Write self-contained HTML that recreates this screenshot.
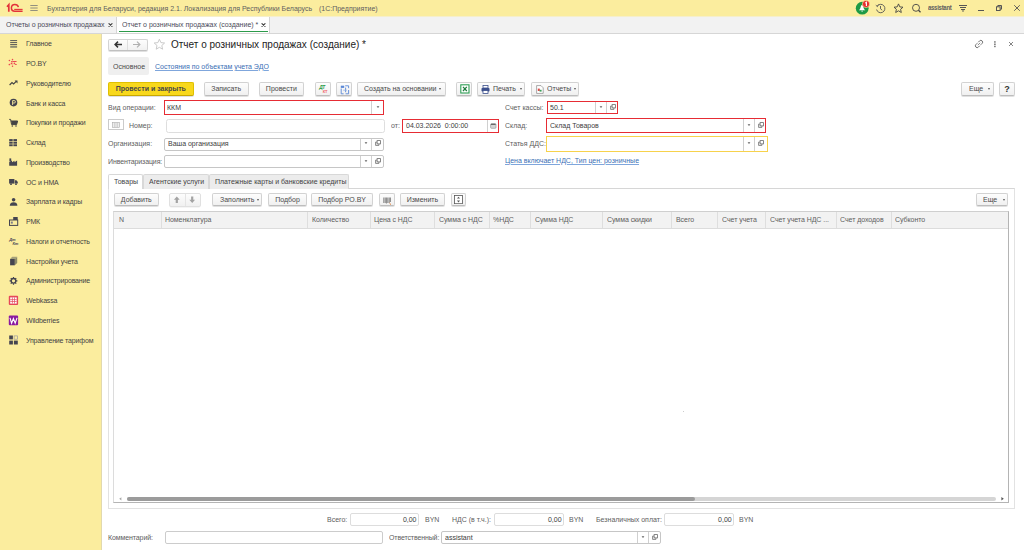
<!DOCTYPE html>
<html><head><meta charset="utf-8">
<style>
*{box-sizing:border-box;margin:0;padding:0}
html,body{width:1024px;height:550px;overflow:hidden;background:#fff;font-family:"Liberation Sans",sans-serif;font-size:7px;color:#4d4d4d}
.a{position:absolute;white-space:nowrap}
.t{position:absolute;white-space:nowrap;font-size:7px;line-height:10px;height:10px}
.s{transform:scaleX(var(--sx));transform-origin:0 50%}
:root{--sx:0.9}
.btn{position:absolute;height:14px;border:1px solid #d2d2d2;border-bottom-color:#bdbdbd;border-radius:2px;background:linear-gradient(#fdfdfd,#f0f0f0);box-shadow:0 1px 0.5px rgba(0,0,0,.12);color:#4a4a4a;font-size:7px;white-space:nowrap}
.btn span.l{position:absolute;top:1.5px;line-height:10px}
.fld{position:absolute;background:#fff;border:1px solid #c6c6c6;border-radius:2px}
.fld .v{position:absolute;left:3px;top:50%;margin-top:-5px;line-height:10px;color:#333;white-space:nowrap}
.dd{position:absolute;top:1px;bottom:1px;width:1px;background:#d6d6d6}
.th{position:absolute;top:0;height:16px;line-height:16px;padding-left:4px;color:#555;font-size:7px;white-space:nowrap}
.thd{position:absolute;top:0;height:15px;width:1px;background:#e2e2e2}
</style></head><body>
<div class="a" style="left:0;top:0;width:1024px;height:16px;background:#fbed9e"></div>
<svg class="a" style="left:4px;top:1px" width="20" height="14" viewBox="4 1 20 14">
    <path d="M7 6.7 L8.8 4.7 V11.8" stroke="#e3323a" stroke-width="1.7" fill="none"/>
    <path d="M18.4 7.1 C17.9 5.3 16.6 4.6 14.9 4.6 C12.7 4.6 11.4 6.1 11.4 8.1 C11.4 10.2 12.8 11.3 14.8 11.3 H22.6" stroke="#e3323a" stroke-width="1.5" fill="none"/>
    <path d="M14.2 9.4 H22.6" stroke="#e3323a" stroke-width="1.1" fill="none"/>
  </svg>
<svg class="a" style="left:30px;top:4px" width="8" height="8" viewBox="0 0 8 8"><path d="M0.3 1.5H7.7M0.3 4H7.7M0.3 6.5H7.7" stroke="#777" stroke-width="0.8"/></svg>
<div class="t s" style="left:47px;top:3.80px;color:#606060;font-size:7.78px;">Бухгалтерия для Беларуси, редакция 2.1. Локализация для Республики Беларусь</div>
<div class="t s" style="left:318.5px;top:3.80px;color:#606060;font-size:7.78px;">(1С:Предприятие)</div>
<svg class="a" style="left:855px;top:0px" width="16" height="16" viewBox="0 0 16 16">
    <circle cx="7.2" cy="8.2" r="6.4" fill="#1e9a45"/>
    <path d="M3.9 10.3 C5.1 9.3 5.5 7.6 5.9 6.2 C6.1 5.4 6.5 5 7 5 C7.5 5 7.9 5.4 8.1 6.2 C8.5 7.6 8.9 9.3 10.3 10.3 Z" fill="#fff"/>
    <circle cx="7.1" cy="11.1" r="0.7" fill="#fff"/>
    <circle cx="11" cy="4" r="3.6" fill="#e52d2d" stroke="#fbed9e" stroke-width="0.6"/>
    <path d="M10.2 3.1 L11.4 2.3 V6" stroke="#fff" stroke-width="1.1" fill="none"/>
  </svg>
<svg class="a" style="left:875px;top:3px" width="11" height="11" viewBox="0 0 11 11">
    <path d="M2.2 3.2 A4.2 4.2 0 1 1 1.6 6.5" stroke="#555" stroke-width="0.9" fill="none"/>
    <path d="M0.8 2.2 L2.4 3.6 L3.4 1.6" stroke="#555" stroke-width="0.9" fill="none"/>
    <path d="M5.5 3 V5.8 L7.2 7.2" stroke="#555" stroke-width="0.9" fill="none"/>
  </svg>
<svg class="a" style="left:893px;top:3px" width="11" height="11" viewBox="0 0 11 11">
    <path d="M5.5 0.9 L6.8 3.9 L10 4.2 L7.6 6.3 L8.3 9.5 L5.5 7.8 L2.7 9.5 L3.4 6.3 L1 4.2 L4.2 3.9 Z" stroke="#444" stroke-width="0.9" fill="none" stroke-linejoin="round"/>
  </svg>
<svg class="a" style="left:911px;top:3px" width="11" height="11" viewBox="0 0 11 11">
    <circle cx="5" cy="4.8" r="3.5" stroke="#444" stroke-width="0.9" fill="none"/>
    <path d="M7.5 7.3 L9.5 9.3" stroke="#444" stroke-width="1.3"/>
  </svg>
<div class="t s" style="left:928px;top:3.30px;color:#606060;font-size:6.67px;font-weight:bold;letter-spacing:-0.3px">assistant</div>
<svg class="a" style="left:958px;top:4px" width="10" height="9" viewBox="0 0 10 9">
    <path d="M1 1.5H9M2 3.5H8M3 5.5H7" stroke="#555" stroke-width="1"/>
    <path d="M3.7 6.5H6.3L5 8Z" fill="#555"/>
  </svg>
<div class="a" style="left:978px;top:10px;width:5.5px;height:1px;background:#555"></div>
<svg class="a" style="left:996px;top:5px" width="6" height="6" viewBox="0 0 6 6">
    <rect x="0.5" y="1.8" width="3.6" height="3.7" stroke="#555" stroke-width="1" fill="none"/>
    <path d="M1.8 1.8V0.5H5.5V4.2H4.1" stroke="#555" stroke-width="1" fill="none"/>
  </svg>
<svg class="a" style="left:1013px;top:4px" width="8" height="8" viewBox="0 0 8 8"><path d="M1.2 1.2L6.8 6.8M6.8 1.2L1.2 6.8" stroke="#555" stroke-width="0.9"/></svg>
<div class="a" style="left:0;top:16px;width:1024px;height:18px;background:#f2f2f2;border-bottom:1px solid #d6d6d6"></div>
<div class="a" style="left:0;top:16px;width:1024px;height:1px;background:#f6efcb"></div>
<div class="t s" style="left:5.8px;top:20.00px;color:#4b4b5a;font-size:7.78px;letter-spacing:-0.06px">Отчеты о розничных продажах</div>
<svg class="a" style="left:108px;top:23px" width="5" height="4" viewBox="0 0 5 4"><path d="M0.6 0.4L4.4 3.6M4.4 0.4L0.6 3.6" stroke="#444" stroke-width="1.2"/></svg>
<div class="a" style="left:116px;top:17px;width:1px;height:16px;background:#d4d4d4"></div>
<div class="a" style="left:117px;top:17px;width:152px;height:16px;background:#fff"></div>
<div class="a" style="left:118.5px;top:30.8px;width:149.5px;height:1.5px;background:#2c9a4a"></div>
<div class="t s" style="left:122.3px;top:20.00px;color:#4b4b5a;font-size:7.78px;">Отчет о розничных продажах (создание) *</div>
<svg class="a" style="left:261px;top:23px" width="5" height="4" viewBox="0 0 5 4"><path d="M0.6 0.4L4.4 3.6M4.4 0.4L0.6 3.6" stroke="#444" stroke-width="1.2"/></svg>
<div class="a" style="left:269px;top:17px;width:1px;height:16px;background:#d4d4d4"></div>
<div class="a" style="left:0;top:34px;width:102px;height:516px;background:#fbed9e;border-right:1px solid #e2d9ad"></div>
<div class="t s" style="left:25.5px;top:39.40px;color:#444;font-size:7.78px;letter-spacing:-0.17px">Главное</div>
<div class="t s" style="left:25.5px;top:59.14px;color:#444;font-size:7.78px;letter-spacing:-0.17px">РО.BY</div>
<div class="t s" style="left:25.5px;top:78.88px;color:#444;font-size:7.78px;letter-spacing:-0.17px">Руководителю</div>
<div class="t s" style="left:25.5px;top:98.62px;color:#444;font-size:7.78px;letter-spacing:-0.17px">Банк и касса</div>
<div class="t s" style="left:25.5px;top:118.36px;color:#444;font-size:7.78px;letter-spacing:-0.17px">Покупки и продажи</div>
<div class="t s" style="left:25.5px;top:138.10px;color:#444;font-size:7.78px;letter-spacing:-0.17px">Склад</div>
<div class="t s" style="left:25.5px;top:157.84px;color:#444;font-size:7.78px;letter-spacing:-0.17px">Производство</div>
<div class="t s" style="left:25.5px;top:177.58px;color:#444;font-size:7.78px;letter-spacing:-0.17px">ОС и НМА</div>
<div class="t s" style="left:25.5px;top:197.32px;color:#444;font-size:7.78px;letter-spacing:-0.17px">Зарплата и кадры</div>
<div class="t s" style="left:25.5px;top:217.06px;color:#444;font-size:7.78px;letter-spacing:-0.17px">РМК</div>
<div class="t s" style="left:25.5px;top:236.80px;color:#444;font-size:7.78px;letter-spacing:-0.17px">Налоги и отчетность</div>
<div class="t s" style="left:25.5px;top:256.54px;color:#444;font-size:7.78px;letter-spacing:-0.17px">Настройки учета</div>
<div class="t s" style="left:25.5px;top:276.28px;color:#444;font-size:7.78px;letter-spacing:-0.17px">Администрирование</div>
<div class="t s" style="left:25.5px;top:296.02px;color:#444;font-size:7.78px;letter-spacing:-0.17px">Webkassa</div>
<div class="t s" style="left:25.5px;top:315.76px;color:#444;font-size:7.78px;letter-spacing:-0.17px">Wildberries</div>
<div class="t s" style="left:25.5px;top:335.50px;color:#444;font-size:7.78px;letter-spacing:-0.17px">Управление тарифом</div>
<svg class="a" style="left:0;top:0" width="101" height="550" viewBox="0 0 101 550">
  <!-- Главное -->
  <path d="M10.2 40.6H17.1M10.2 42.6H17.1M10.2 44.6H17.1" stroke="#555" stroke-width="1"/>
  <rect x="10.2" y="45.8" width="6.9" height="2" fill="#8a8a70"/>
  <!-- PO.BY -->
  <g fill="#ea4a50">
    <circle cx="12.5" cy="59.4" r="0.75"/><circle cx="9.4" cy="60.5" r="0.8"/>
    <rect x="11" y="60.9" width="5.7" height="1.2" rx="0.5"/>
    <circle cx="11.5" cy="63.4" r="0.85"/><circle cx="14.4" cy="63.4" r="0.85"/>
    <circle cx="9.4" cy="64.5" r="0.85"/><rect x="15" y="63.9" width="1.8" height="1.1" rx="0.5"/>
    <circle cx="12.5" cy="66.3" r="0.75"/>
  </g>
  <path d="M12.5 60V66" stroke="#ee9a7a" stroke-width="0.5"/>
  <!-- Руководителю -->
  <path d="M9.6 85L12 82.6L13.6 84L16.5 81.1" stroke="#444" stroke-width="1.2" fill="none"/>
  <path d="M14.6 80.5H17.5V83.4Z" fill="#444"/>
  <!-- Банк -->
  <circle cx="13.5" cy="102.6" r="3.8" fill="#454550"/>
  <path d="M12.6 105V100.6H14.2A1.2 1.2 0 0 1 14.2 103H12.6" stroke="#fbed9e" stroke-width="0.9" fill="none"/>
  <!-- Покупки -->
  <path d="M9.2 119.4H10.6L11.6 124.6H16.6L17.6 121H11" stroke="#444" stroke-width="1" fill="none"/>
  <path d="M11.2 121H17.6L16.6 124.6H11.8Z" fill="#444"/>
  <circle cx="12.3" cy="126" r="0.8" fill="#444"/><circle cx="16" cy="126" r="0.8" fill="#444"/>
  <!-- Склад -->
  <g fill="#454550">
    <rect x="9.2" y="139.1" width="3.5" height="2" /><rect x="13.4" y="139.1" width="3.6" height="2"/>
    <rect x="9.2" y="141.7" width="3.5" height="2" /><rect x="13.4" y="141.7" width="3.6" height="2"/>
    <rect x="9.2" y="144.3" width="3.5" height="1.9" /><rect x="13.4" y="144.3" width="3.6" height="1.9"/>
  </g>
  <!-- Производство -->
  <path d="M9.2 165.8V162L12 160.5V162.2L14.5 160.7V162.2L17.1 160.6V165.8Z" fill="#454550"/>
  <rect x="9.4" y="158.4" width="1.8" height="3" fill="#454550"/>
  <!-- ОС и НМА truck -->
  <path d="M9.1 179H14.4V183.6H9.1Z" fill="#454550"/>
  <path d="M14.8 180.2H16.4L17.8 182V183.6H14.8Z" fill="#454550"/>
  <circle cx="11" cy="184.2" r="0.9" fill="#454550"/><circle cx="16" cy="184.2" r="0.9" fill="#454550"/>
  <!-- Зарплата -->
  <circle cx="13.6" cy="199.8" r="1.8" fill="#454550"/>
  <path d="M9.8 205.8C9.8 203.4 11.4 202.3 13.6 202.3C15.8 202.3 17.4 203.4 17.4 205.8Z" fill="#454550"/>
  <!-- РМК -->
  <rect x="9.5" y="220" width="8.2" height="5.4" fill="none" stroke="#454550" stroke-width="1"/>
  <rect x="13.2" y="217" width="4.5" height="3" fill="#454550"/>
  <rect x="10.8" y="221.6" width="2" height="2" fill="#7c7c8a"/>
  <!-- Налоги Дт Кт -->
  <text x="9.2" y="240.8" font-family="Liberation Sans" font-size="4" font-style="italic" font-weight="bold" fill="#4a4a55" letter-spacing="-0.2">Дт</text>
  <text x="12.6" y="244.9" font-family="Liberation Sans" font-size="4" font-style="italic" font-weight="bold" fill="#4a4a55" letter-spacing="-0.2">Кт</text>
  <!-- Настройки учета box -->
  <path d="M10.1 259L12.2 256.7H17.2L14.8 259Z" fill="#a4a07a"/>
  <path d="M14.8 259L17.2 256.7V263L14.8 265.3Z" fill="#8c8a6a"/>
  <rect x="10.1" y="259" width="4.7" height="6.3" fill="#454550"/>
  <!-- Админ gear -->
  <g transform="translate(13.5 280.8)">
    <circle r="2.3" fill="none" stroke="#454550" stroke-width="1.4"/>
    <path d="M0 -3.9V-2.4M0 3.9V2.4M-3.9 0H-2.4M3.9 0H2.4M-2.75 -2.75L-1.7 -1.7M2.75 2.75L1.7 1.7M-2.75 2.75L-1.7 1.7M2.75 -2.75L1.7 -1.7" stroke="#454550" stroke-width="1.2"/>
  </g>
  <!-- Webkassa -->
  <rect x="8.8" y="295.8" width="9.3" height="9.3" rx="1" fill="#e5485a"/>
  <rect x="10.2" y="297.4" width="6.5" height="6.2" fill="#fff"/>
  <path d="M12.4 297.4V303.6M14.5 297.4V303.6M10.2 299.6H16.7M10.2 301.5H16.7" stroke="#e5485a" stroke-width="0.7"/>
  <!-- Wildberries -->
  <rect x="8.8" y="315.6" width="9.3" height="9.6" rx="1" fill="#8b1aa0"/>
  <path d="M10 317.8L11.6 323.2L13.4 318.6L15.2 323.2L17 317.8" stroke="#fff" stroke-width="1.1" fill="none"/>
  <!-- Тариф -->
  <rect x="9.2" y="335.5" width="3.7" height="3.9" fill="#454550"/>
  <rect x="14.1" y="335.9" width="3.3" height="3.3" fill="none" stroke="#9a9aa0" stroke-width="0.7"/>
  <rect x="9.2" y="340.6" width="3.7" height="3.9" fill="#454550"/>
  <rect x="13.9" y="340.6" width="3.9" height="3.9" fill="#454550"/>
</svg>
<div class="a" style="left:108px;top:38.5px;width:39.5px;height:12.5px;border:1px solid #d3d3d3;border-bottom-color:#c0c0c0;border-radius:2px;background:linear-gradient(#fdfdfd,#f1f1f1);box-shadow:0 1px 0.5px rgba(0,0,0,.12)"></div>
<div class="a" style="left:127px;top:39.5px;width:1px;height:10.5px;background:#dedede"></div>
<svg class="a" style="left:113px;top:40px" width="10" height="9" viewBox="0 0 10 9"><path d="M9 4.5H2.5M5 1.6L2.1 4.5L5 7.4" stroke="#333" stroke-width="1.5" fill="none"/></svg>
<svg class="a" style="left:132px;top:40px" width="10" height="9" viewBox="0 0 10 9"><path d="M1 4.5H7.5M5 1.6L7.9 4.5L5 7.4" stroke="#b0b0b0" stroke-width="1.2" fill="none"/></svg>
<svg class="a" style="left:153px;top:38px" width="13" height="13" viewBox="0 0 13 13">
  <path d="M6.4 1.2 L7.9 4.6 L11.6 5 L8.8 7.5 L9.6 11.2 L6.4 9.3 L3.2 11.2 L4 7.5 L1.2 5 L4.9 4.6 Z" stroke="#c4c4c4" stroke-width="0.9" fill="none" stroke-linejoin="round"/>
</svg>
<div class="t" style="left:171px;top:38px;font-size:10px;line-height:13px;height:13px;color:#222">Отчет о розничных продажах (создание) *</div>
<svg class="a" style="left:974px;top:39px" width="10" height="10" viewBox="0 0 10 10">
  <path d="M4.2 3.3 L5.6 1.9 A1.6 1.6 0 0 1 8.1 4.4 L6.7 5.8" stroke="#707070" stroke-width="1" fill="none"/>
  <path d="M5.8 6.7 L4.4 8.1 A1.6 1.6 0 0 1 1.9 5.6 L3.3 4.2" stroke="#707070" stroke-width="1" fill="none"/>
  <path d="M3.8 6.2 L6.2 3.8" stroke="#707070" stroke-width="0.8"/>
</svg>
<svg class="a" style="left:993px;top:40px" width="4" height="8" viewBox="0 0 4 8"><rect x="1.2" y="1.2" width="1.4" height="1.5" fill="#666"/><rect x="1.2" y="3.5" width="1.4" height="1.5" fill="#666"/><rect x="1.2" y="5.7" width="1.4" height="1.5" fill="#666"/></svg>
<svg class="a" style="left:1008px;top:41px" width="6" height="6" viewBox="0 0 6 6"><path d="M1 1L5 5M5 1L1 5" stroke="#777" stroke-width="0.9"/></svg>
<div class="a" style="left:108px;top:57px;width:41px;height:17.5px;background:#efefef;border-radius:2px"></div>
<div class="t s" style="left:113.2px;top:61.90px;color:#4a4a4a;font-size:7.78px;">Основное</div>
<div class="t s" style="left:155.3px;top:61.90px;color:#3a6fb5;font-size:7.78px;text-decoration:underline;text-decoration-color:#7fa6dc;text-decoration-thickness:0.7px">Состояния по объектам учета ЭДО</div>
<div class="btn" style="left:108px;top:81.5px;width:85.69999999999999px;height:14.200000000000003px;background:#f8d81c;border-color:#e0c000;border-bottom-color:#c8a800;font-weight:bold">
<span class="l" style="left:0;right:0;text-align:center;top:1.10px;color:#474747;font-size:7.78px;transform:scaleX(0.9);transform-origin:50% 50%">Провести и закрыть</span>

</div>
<div class="btn" style="left:204.3px;top:81.5px;width:44.29999999999998px;height:14.200000000000003px;">
<span class="l" style="left:0;right:0;text-align:center;top:1.10px;color:#4a4a4a;font-size:7.78px;transform:scaleX(0.9);transform-origin:50% 50%">Записать</span>

</div>
<div class="btn" style="left:259.3px;top:81.5px;width:44.69999999999999px;height:14.200000000000003px;">
<span class="l" style="left:0;right:0;text-align:center;top:1.10px;color:#4a4a4a;font-size:7.78px;transform:scaleX(0.9);transform-origin:50% 50%">Провести</span>

</div>
<div class="btn" style="left:315.3px;top:81.5px;width:15.300000000000011px;height:14.200000000000003px;">
<svg class="a" style="left:2px;top:1.5px" width="12" height="11" viewBox="0 0 12 11">
 <text x="1.3" y="4.8" font-family="Liberation Sans" font-weight="bold" font-style="italic" font-size="4.8" fill="#2a9a48" letter-spacing="-0.4">ДТ</text>
 <text x="4.8" y="8.5" font-family="Liberation Sans" font-weight="bold" font-size="4" fill="#f06464" letter-spacing="-0.3">КТ</text></svg>
</div>
<div class="btn" style="left:336.1px;top:81.5px;width:15.5px;height:14.200000000000003px;">
<svg class="a" style="left:2.8px;top:2px" width="10" height="10" viewBox="0 0 10 10">
 <rect x="0.8" y="0.7" width="3.4" height="2.2" fill="#5a88d6"/>
 <path d="M1.2 3.5V8.8H3.6M5.2 0.8H8.6V3.2M8.6 5V8.8H5.6M5.6 2.6V7.2" stroke="#5a88d6" stroke-width="0.9" fill="none"/>
 <path d="M3.2 5.2H6.8" stroke="#8fb0e6" stroke-width="0.8"/></svg>
</div>
<div class="btn" style="left:356.6px;top:81.5px;width:89.09999999999997px;height:14.200000000000003px;">
<span class="l" style="left:6.899999999999977px;top:1.10px;color:#4a4a4a;font-size:7.78px;transform:scaleX(0.9);transform-origin:0 50%">Создать на основании</span>
<div class="a" style="left:81.60px;top:5.30px;width:0;height:0;border-left:1.5px solid transparent;border-right:1.5px solid transparent;border-top:2px solid #555"></div>

</div>
<div class="btn" style="left:456.2px;top:81.5px;width:16.100000000000023px;height:14.200000000000003px;">
<svg class="a" style="left:3px;top:1.5px" width="10" height="10" viewBox="0 0 10 10">
 <rect x="0.8" y="0.8" width="8.2" height="8.2" fill="#fff" stroke="#2f9e55" stroke-width="1.1"/>
 <path d="M3 2.8L6.8 7M6.8 2.8L3 7" stroke="#1e7a3c" stroke-width="1.2"/></svg>
</div>
<div class="btn" style="left:477.3px;top:81.5px;width:47.99999999999994px;height:14.200000000000003px;">
<span class="l" style="left:15.199999999999989px;top:1.10px;color:#4a4a4a;font-size:7.78px;transform:scaleX(0.9);transform-origin:0 50%">Печать</span>
<div class="a" style="left:42.10px;top:5.30px;width:0;height:0;border-left:1.5px solid transparent;border-right:1.5px solid transparent;border-top:2px solid #555"></div>
<svg class="a" style="left:3px;top:2.2px" width="9" height="9" viewBox="0 0 9 9">
 <rect x="2" y="0.5" width="5" height="2.5" fill="#fff" stroke="#3b4f8c" stroke-width="0.8"/>
 <rect x="0.5" y="3" width="8" height="3.6" rx="0.8" fill="#3b4f8c"/>
 <rect x="2" y="5.5" width="5" height="3" fill="#fff" stroke="#3b4f8c" stroke-width="0.8"/></svg>
</div>
<div class="btn" style="left:530.8px;top:81.5px;width:48.700000000000045px;height:14.200000000000003px;">
<span class="l" style="left:15.0px;top:1.10px;color:#4a4a4a;font-size:7.78px;transform:scaleX(0.9);transform-origin:0 50%">Отчеты</span>
<div class="a" style="left:42.60px;top:5.30px;width:0;height:0;border-left:1.5px solid transparent;border-right:1.5px solid transparent;border-top:2px solid #555"></div>
<svg class="a" style="left:4px;top:2px" width="8" height="9" viewBox="0 0 8 9">
 <path d="M0.6 0.6H5L7.2 2.8V8.4H0.6Z" fill="#fff" stroke="#888" stroke-width="0.7"/>
 <rect x="1.8" y="3.6" width="2" height="2.4" fill="#e04848"/><rect x="3.6" y="4.8" width="2" height="1.8" fill="#3aa05a"/></svg>
</div>
<div class="btn" style="left:961.4px;top:81.5px;width:32.30000000000007px;height:14.200000000000003px;">
<span class="l" style="left:6.300000000000068px;top:1.10px;color:#4a4a4a;font-size:7.78px;transform:scaleX(0.9);transform-origin:0 50%">Еще</span>
<div class="a" style="left:25.90px;top:5.30px;width:0;height:0;border-left:1.5px solid transparent;border-right:1.5px solid transparent;border-top:2px solid #555"></div>

</div>
<div class="btn" style="left:999.2px;top:81.5px;width:15.399999999999977px;height:14.200000000000003px;">
<div class="a" style="left:0;right:0;top:1px;text-align:center;font-size:9px;line-height:11px;font-weight:bold;color:#333">?</div>
</div>
<div class="t s" style="left:108px;top:102.80px;color:#606060;font-size:7.78px;">Вид операции:</div>
<div class="fld" style="left:163.7px;top:100.4px;width:220.3px;height:14.199999999999989px;border:none;border-radius:0px"></div>
<div class="a" style="left:371.0px;top:100.4px;width:1px;height:14.199999999999989px;background:#d0d0d0"></div>
<div class="a" style="left:163.7px;top:100.4px;width:220.3px;height:14.199999999999989px;border:1.5px solid #e62c34;border-radius:0px"></div>
<div class="t s" style="left:167.2px;top:102.50px;color:#404040;font-size:7.78px;">ККМ</div>
<svg class="a" style="left:375.80px;top:104.90px" width="4" height="4" viewBox="0 0 4 4"><path d="M0.6 1.2H3.4L2 2.9Z" fill="#606060"/></svg>
<div class="a" style="left:108px;top:119.2px;width:15.7px;height:10.5px;border:1px solid #cbcbcb;background:#fff"></div>
<svg class="a" style="left:112px;top:122px" width="8" height="6" viewBox="0 0 8 6"><rect x="0.5" y="0.5" width="7" height="4.8" fill="#eee" stroke="#aaa" stroke-width="0.6"/><path d="M2.5 0.5V5.3M4 0.5V5.3M5.5 0.5V5.3" stroke="#bbb" stroke-width="0.5"/></svg>
<div class="t s" style="left:129.2px;top:121.00px;color:#606060;font-size:7.78px;">Номер:</div>
<div class="fld" style="left:166.4px;top:119.4px;width:218.79999999999998px;height:13.199999999999989px;border:none;border-radius:2.5px"></div>
<div class="a" style="left:166.4px;top:119.4px;width:218.79999999999998px;height:13.199999999999989px;border:1px solid #dedede;border-radius:2.5px"></div>
<div class="t s" style="left:390.6px;top:121.00px;color:#606060;font-size:7.78px;">от:</div>
<div class="fld" style="left:402.3px;top:119.3px;width:96.69999999999999px;height:13.399999999999991px;border:none;border-radius:0px"></div>
<div class="a" style="left:486.8px;top:119.3px;width:1px;height:13.399999999999991px;background:#d0d0d0"></div>
<div class="a" style="left:402.3px;top:119.3px;width:96.69999999999999px;height:13.399999999999991px;border:1.5px solid #e62c34;border-radius:0px"></div>
<div class="t s" style="left:405.5px;top:121.00px;color:#404040;font-size:7.78px;">04.03.2026&nbsp; 0:00:00</div>
<svg class="a" style="left:490px;top:122.5px" width="7" height="6" viewBox="0 0 7 6"><rect x="0.6" y="0.7" width="5.4" height="4.6" rx="0.9" fill="#d4d4d4" stroke="#8a8a8a" stroke-width="0.6"/><path d="M1 1.3H5.6" stroke="#444" stroke-width="0.9"/></svg>
<div class="t s" style="left:108px;top:138.80px;color:#606060;font-size:7.78px;">Организация:</div>
<div class="fld" style="left:164.2px;top:137.5px;width:219.40000000000003px;height:13.0px;border:none;border-radius:2px"></div>
<div class="a" style="left:359.8px;top:137.5px;width:1px;height:13.0px;background:#d0d0d0"></div>
<div class="a" style="left:371.0px;top:137.5px;width:1px;height:13.0px;background:#d0d0d0"></div>
<div class="a" style="left:164.2px;top:137.5px;width:219.40000000000003px;height:13.0px;border:1px solid #c6c6c6;border-radius:2px"></div>
<div class="t s" style="left:167.5px;top:139.00px;color:#404040;font-size:7.78px;">Ваша организация</div>
<svg class="a" style="left:364.00px;top:141.40px" width="4" height="4" viewBox="0 0 4 4"><path d="M0.6 1.2H3.4L2 2.9Z" fill="#606060"/></svg>
<svg class="a" style="left:375.00px;top:140.30px" width="6" height="6" viewBox="0 0 6 6"><path d="M2.1 2.1H0.6V5.4H3.9V3.9" stroke="#6a6a6a" stroke-width="0.8" fill="none"/><rect x="2.1" y="0.6" width="3.3" height="3.3" stroke="#6a6a6a" stroke-width="0.8" fill="none"/></svg>
<div class="t s" style="left:108px;top:157.00px;color:#606060;font-size:7.78px;letter-spacing:-0.12px">Инвентаризация:</div>
<div class="fld" style="left:164.2px;top:155.2px;width:219.40000000000003px;height:13.300000000000011px;border:none;border-radius:2px"></div>
<div class="a" style="left:359.8px;top:155.2px;width:1px;height:13.300000000000011px;background:#d0d0d0"></div>
<div class="a" style="left:371.0px;top:155.2px;width:1px;height:13.300000000000011px;background:#d0d0d0"></div>
<div class="a" style="left:164.2px;top:155.2px;width:219.40000000000003px;height:13.300000000000011px;border:1px solid #c6c6c6;border-radius:2px"></div>
<svg class="a" style="left:364.00px;top:159.25px" width="4" height="4" viewBox="0 0 4 4"><path d="M0.6 1.2H3.4L2 2.9Z" fill="#606060"/></svg>
<svg class="a" style="left:375.00px;top:158.15px" width="6" height="6" viewBox="0 0 6 6"><path d="M2.1 2.1H0.6V5.4H3.9V3.9" stroke="#6a6a6a" stroke-width="0.8" fill="none"/><rect x="2.1" y="0.6" width="3.3" height="3.3" stroke="#6a6a6a" stroke-width="0.8" fill="none"/></svg>
<div class="t s" style="left:504.8px;top:102.60px;color:#606060;font-size:7.78px;">Счет кассы:</div>
<div class="fld" style="left:546.9px;top:101.2px;width:71.0px;height:12.700000000000003px;border:none;border-radius:0px"></div>
<div class="a" style="left:595.0px;top:101.2px;width:1px;height:12.700000000000003px;background:#d0d0d0"></div>
<div class="a" style="left:605.9px;top:101.2px;width:1px;height:12.700000000000003px;background:#d0d0d0"></div>
<div class="a" style="left:546.9px;top:101.2px;width:71.0px;height:12.700000000000003px;border:1.5px solid #e62c34;border-radius:0px"></div>
<div class="t s" style="left:550px;top:102.55px;color:#404040;font-size:7.78px;">50.1</div>
<svg class="a" style="left:599.00px;top:104.95px" width="4" height="4" viewBox="0 0 4 4"><path d="M0.6 1.2H3.4L2 2.9Z" fill="#606060"/></svg>
<svg class="a" style="left:609.70px;top:103.85px" width="6" height="6" viewBox="0 0 6 6"><path d="M2.1 2.1H0.6V5.4H3.9V3.9" stroke="#6a6a6a" stroke-width="0.8" fill="none"/><rect x="2.1" y="0.6" width="3.3" height="3.3" stroke="#6a6a6a" stroke-width="0.8" fill="none"/></svg>
<div class="t s" style="left:505px;top:121.00px;color:#606060;font-size:7.78px;">Склад:</div>
<div class="fld" style="left:546.4px;top:118.2px;width:219.39999999999998px;height:14.799999999999997px;border:none;border-radius:0px"></div>
<div class="a" style="left:742.9px;top:118.2px;width:1px;height:14.799999999999997px;background:#d0d0d0"></div>
<div class="a" style="left:753.9px;top:118.2px;width:1px;height:14.799999999999997px;background:#d0d0d0"></div>
<div class="a" style="left:546.4px;top:118.2px;width:219.39999999999998px;height:14.799999999999997px;border:1.5px solid #e62c34;border-radius:0px"></div>
<div class="t s" style="left:549.5px;top:120.60px;color:#404040;font-size:7.78px;">Склад Товаров</div>
<svg class="a" style="left:747.00px;top:123.00px" width="4" height="4" viewBox="0 0 4 4"><path d="M0.6 1.2H3.4L2 2.9Z" fill="#606060"/></svg>
<svg class="a" style="left:757.60px;top:121.90px" width="6" height="6" viewBox="0 0 6 6"><path d="M2.1 2.1H0.6V5.4H3.9V3.9" stroke="#6a6a6a" stroke-width="0.8" fill="none"/><rect x="2.1" y="0.6" width="3.3" height="3.3" stroke="#6a6a6a" stroke-width="0.8" fill="none"/></svg>
<div class="t s" style="left:505px;top:138.80px;color:#606060;font-size:7.78px;">Статья ДДС:</div>
<div class="fld" style="left:545.5px;top:135.8px;width:222.0px;height:16.0px;border:none;border-radius:0px"></div>
<div class="a" style="left:742.9px;top:135.8px;width:1px;height:16.0px;background:#d0d0d0"></div>
<div class="a" style="left:753.9px;top:135.8px;width:1px;height:16.0px;background:#d0d0d0"></div>
<div class="a" style="left:545.5px;top:135.8px;width:222.0px;height:16.0px;border:1.6px solid #f7d24c;border-radius:0px"></div>
<svg class="a" style="left:747.00px;top:141.20px" width="4" height="4" viewBox="0 0 4 4"><path d="M0.6 1.2H3.4L2 2.9Z" fill="#606060"/></svg>
<svg class="a" style="left:757.90px;top:140.10px" width="6" height="6" viewBox="0 0 6 6"><path d="M2.1 2.1H0.6V5.4H3.9V3.9" stroke="#6a6a6a" stroke-width="0.8" fill="none"/><rect x="2.1" y="0.6" width="3.3" height="3.3" stroke="#6a6a6a" stroke-width="0.8" fill="none"/></svg>
<div class="t s" style="left:505px;top:156.00px;color:#3a6fb5;font-size:7.78px;text-decoration:underline;text-decoration-color:#7fa6dc;text-decoration-thickness:0.7px">Цена включает НДС, Тип цен: розничные</div>
<div class="a" style="left:108px;top:188px;width:907px;height:321px;border:1px solid #e2e2e2;border-top-color:#d6d6d6"></div>
<div class="a" style="left:142.5px;top:173.5px;width:66.5px;height:15px;background:#ececec;border:1px solid #d8d8d8;border-bottom:none;border-radius:2px 2px 0 0"></div>
<div class="a" style="left:208.5px;top:173.5px;width:140px;height:15px;background:#ececec;border:1px solid #d8d8d8;border-bottom:none;border-radius:2px 2px 0 0"></div>
<div class="a" style="left:108px;top:173.5px;width:35px;height:15.5px;background:#fff;border:1px solid #d8d8d8;border-bottom:none;border-radius:2px 2px 0 0"></div>
<div class="t s" style="left:114px;top:176.50px;color:#444;font-size:7.78px;">Товары</div>
<div class="t s" style="left:148.5px;top:176.50px;color:#444;font-size:7.78px;">Агентские услуги</div>
<div class="t s" style="left:214.5px;top:176.50px;color:#444;font-size:7.78px;">Платежные карты и банковские кредиты</div>
<div class="btn" style="left:114px;top:193.2px;width:44.599999999999994px;height:13.200000000000017px;">
<span class="l" style="left:0;right:0;text-align:center;top:0.60px;color:#4a4a4a;font-size:7.78px;transform:scaleX(0.9);transform-origin:50% 50%">Добавить</span>

</div>
<div class="btn" style="left:169px;top:193.2px;width:32px;height:13.800000000000011px;box-shadow:0 0.5px 0.5px rgba(0,0,0,.08);border-color:#e0e0e0">
<div class="a" style="left:15px;top:0;width:1px;height:11.5px;background:#e4e4e4"></div>
</div>
<svg class="a" style="left:170px;top:195px" width="30" height="10" viewBox="170 195 30 10"><path d="M176.8 196.6L179.7 199.7H177.9V202.9H175.7V199.7H173.9Z" fill="#a3a3a3"/><path d="M192.2 202.9L195.1 199.8H193.3V196.6H191.1V199.8H189.3Z" fill="#a3a3a3"/></svg>
<div class="btn" style="left:212.2px;top:193.2px;width:50.30000000000001px;height:13.200000000000017px;">
<span class="l" style="left:7.300000000000011px;top:0.60px;color:#4a4a4a;font-size:7.78px;transform:scaleX(0.9);transform-origin:0 50%">Заполнить</span>
<div class="a" style="left:44.10px;top:4.80px;width:0;height:0;border-left:1.5px solid transparent;border-right:1.5px solid transparent;border-top:2px solid #555"></div>

</div>
<div class="btn" style="left:267.5px;top:193.2px;width:39.10000000000002px;height:13.200000000000017px;">
<span class="l" style="left:0;right:0;text-align:center;top:0.60px;color:#4a4a4a;font-size:7.78px;transform:scaleX(0.9);transform-origin:50% 50%">Подбор</span>

</div>
<div class="btn" style="left:311.3px;top:193.2px;width:62.19999999999999px;height:13.200000000000017px;">
<span class="l" style="left:0;right:0;text-align:center;top:0.60px;color:#4a4a4a;font-size:7.78px;transform:scaleX(0.9);transform-origin:50% 50%">Подбор РО.BY</span>

</div>
<div class="btn" style="left:379.4px;top:193.2px;width:15.200000000000045px;height:13.200000000000017px;">
<svg class="a" style="left:3px;top:2.5px" width="9" height="8" viewBox="0 0 9 8">
 <path d="M0.8 0.5V6M2.2 0.5V6M3.4 0.5V6.5M4.8 0.5V6M6.2 0.5V6M7.4 0.5V5" stroke="#777" stroke-width="0.9"/>
 <path d="M6.5 6.2L8 7.6" stroke="#e07a30" stroke-width="1"/></svg>
</div>
<div class="btn" style="left:400.2px;top:193.2px;width:44.80000000000001px;height:13.200000000000017px;">
<span class="l" style="left:0;right:0;text-align:center;top:0.60px;color:#4a4a4a;font-size:7.78px;transform:scaleX(0.9);transform-origin:50% 50%">Изменить</span>

</div>
<div class="btn" style="left:450.6px;top:193.2px;width:15.0px;height:13.200000000000017px;">
<svg class="a" style="left:2.5px;top:0.8px" width="9" height="9" viewBox="0 0 9 9">
 <rect x="0.5" y="0.5" width="8" height="8.2" fill="#fff" stroke="#555" stroke-width="0.8"/>
 <path d="M4.5 1.8L6 3.6H3Z M4.5 7.4L6 5.6H3Z" fill="#555"/></svg>
</div>
<div class="btn" style="left:976.2px;top:193.2px;width:32.19999999999993px;height:13.200000000000017px;">
<span class="l" style="left:6.2999999999999545px;top:0.60px;color:#4a4a4a;font-size:7.78px;transform:scaleX(0.9);transform-origin:0 50%">Еще</span>
<div class="a" style="left:26.00px;top:4.80px;width:0;height:0;border-left:1.5px solid transparent;border-right:1.5px solid transparent;border-top:2px solid #555"></div>

</div>
<div class="a" style="left:113px;top:211px;width:896px;height:292px;border:1px solid #b4b4b4;border-top-color:#cfcfcf;border-left-color:#dcdcdc"></div>
<div class="a" style="left:114px;top:212px;width:894px;height:17px;background:#f2f2f2;border-bottom:1px solid #dcdcdc"></div>
<div class="t s" style="left:118.7px;top:214.80px;color:#606060;font-size:7.78px;letter-spacing:-0.05px">N</div>
<div class="a" style="left:160.5px;top:212px;width:1px;height:16px;background:#dedede"></div>
<div class="t s" style="left:164.8px;top:214.80px;color:#606060;font-size:7.78px;letter-spacing:-0.05px">Номенклатура</div>
<div class="a" style="left:307.4px;top:212px;width:1px;height:16px;background:#dedede"></div>
<div class="t s" style="left:311.7px;top:214.80px;color:#606060;font-size:7.78px;letter-spacing:-0.05px">Количество</div>
<div class="a" style="left:369.8px;top:212px;width:1px;height:16px;background:#dedede"></div>
<div class="t s" style="left:373.8px;top:214.80px;color:#606060;font-size:7.78px;letter-spacing:-0.05px">Цена с НДС</div>
<div class="a" style="left:433.6px;top:212px;width:1px;height:16px;background:#dedede"></div>
<div class="t s" style="left:438.5px;top:214.80px;color:#606060;font-size:7.78px;letter-spacing:-0.05px">Сумма с НДС</div>
<div class="a" style="left:488.7px;top:212px;width:1px;height:16px;background:#dedede"></div>
<div class="t s" style="left:492.9px;top:214.80px;color:#606060;font-size:7.78px;letter-spacing:-0.05px">%НДС</div>
<div class="a" style="left:530.4px;top:212px;width:1px;height:16px;background:#dedede"></div>
<div class="t s" style="left:534.6px;top:214.80px;color:#606060;font-size:7.78px;letter-spacing:-0.05px">Сумма НДС</div>
<div class="a" style="left:602.3px;top:212px;width:1px;height:16px;background:#dedede"></div>
<div class="t s" style="left:606.5px;top:214.80px;color:#606060;font-size:7.78px;letter-spacing:-0.05px">Сумма скидки</div>
<div class="a" style="left:671px;top:212px;width:1px;height:16px;background:#dedede"></div>
<div class="t s" style="left:675.7px;top:214.80px;color:#606060;font-size:7.78px;letter-spacing:-0.05px">Всего</div>
<div class="a" style="left:716.7px;top:212px;width:1px;height:16px;background:#dedede"></div>
<div class="t s" style="left:721.7px;top:214.80px;color:#606060;font-size:7.78px;letter-spacing:-0.05px">Счет учета</div>
<div class="a" style="left:765.2px;top:212px;width:1px;height:16px;background:#dedede"></div>
<div class="t s" style="left:769.8px;top:214.80px;color:#606060;font-size:7.78px;letter-spacing:-0.05px">Счет учета НДС ...</div>
<div class="a" style="left:835.7px;top:212px;width:1px;height:16px;background:#dedede"></div>
<div class="t s" style="left:840.3px;top:214.80px;color:#606060;font-size:7.78px;letter-spacing:-0.05px">Счет доходов</div>
<div class="a" style="left:891px;top:212px;width:1px;height:16px;background:#dedede"></div>
<div class="t s" style="left:894.9px;top:214.80px;color:#606060;font-size:7.78px;letter-spacing:-0.05px">Субконто</div>
<svg class="a" style="left:118px;top:496px" width="5" height="6" viewBox="0 0 5 6"><path d="M1.2 2.8L3.4 1.2V4.4Z" fill="#a8a8a8"/></svg>
<div class="a" style="left:126.5px;top:496.7px;width:869.5px;height:4px;background:#d5d5d5;border-radius:2px"></div>
<div class="a" style="left:126.5px;top:496.7px;width:568px;height:4px;background:#9b9b9b;border-radius:2px"></div>
<svg class="a" style="left:1000px;top:496px" width="5" height="6" viewBox="0 0 5 6"><path d="M3.8 2.8L1.4 1.1V4.5Z" fill="#555"/></svg>
<div class="a" style="left:683px;top:411px;width:1px;height:1px;background:#ccc"></div>
<div class="t s" style="left:327px;top:514.80px;color:#606060;font-size:7.78px;">Всего:</div>
<div class="fld" style="left:350.4px;top:513.4px;width:69.10000000000002px;height:12.700000000000045px;border:none;border-radius:2px"></div>
<div class="a" style="left:350.4px;top:513.4px;width:69.10000000000002px;height:12.700000000000045px;border:1px solid #dddddd;border-radius:2px"></div>
<div class="t" style="left:350.4px;width:66.50000000000003px;text-align:right;top:514.75px;color:#404040;font-size:7.78px;transform:scaleX(0.9);transform-origin:100% 50%">0,00</div>
<div class="t s" style="left:425.4px;top:514.80px;color:#606060;font-size:7.78px;">BYN</div>
<div class="t s" style="left:452px;top:514.80px;color:#606060;font-size:7.78px;">НДС (в т.ч.):</div>
<div class="fld" style="left:494.2px;top:513.4px;width:70.19999999999999px;height:12.700000000000045px;border:none;border-radius:2px"></div>
<div class="a" style="left:494.2px;top:513.4px;width:70.19999999999999px;height:12.700000000000045px;border:1px solid #dddddd;border-radius:2px"></div>
<div class="t" style="left:494.2px;width:67.6px;text-align:right;top:514.75px;color:#404040;font-size:7.78px;transform:scaleX(0.9);transform-origin:100% 50%">0,00</div>
<div class="t s" style="left:569.3px;top:514.80px;color:#606060;font-size:7.78px;">BYN</div>
<div class="t s" style="left:596.1px;top:514.80px;color:#606060;font-size:7.78px;">Безналичных оплат:</div>
<div class="fld" style="left:663.6px;top:513.4px;width:70.29999999999995px;height:12.700000000000045px;border:none;border-radius:2px"></div>
<div class="a" style="left:663.6px;top:513.4px;width:70.29999999999995px;height:12.700000000000045px;border:1px solid #dddddd;border-radius:2px"></div>
<div class="t" style="left:663.6px;width:67.69999999999996px;text-align:right;top:514.75px;color:#404040;font-size:7.78px;transform:scaleX(0.9);transform-origin:100% 50%">0,00</div>
<div class="t s" style="left:738.8px;top:514.80px;color:#606060;font-size:7.78px;">BYN</div>
<div class="t s" style="left:108px;top:533.00px;color:#606060;font-size:7.78px;letter-spacing:-0.1px">Комментарий:</div>
<div class="fld" style="left:164.5px;top:531.3px;width:218.89999999999998px;height:13.200000000000045px;border:none;border-radius:2px"></div>
<div class="a" style="left:164.5px;top:531.3px;width:218.89999999999998px;height:13.200000000000045px;border:1px solid #cccccc;border-radius:2px"></div>
<div class="t s" style="left:389px;top:533.00px;color:#606060;font-size:7.78px;letter-spacing:-0.13px">Ответственный:</div>
<div class="fld" style="left:441.2px;top:531.4px;width:219.7px;height:13.100000000000023px;border:none;border-radius:2px"></div>
<div class="a" style="left:637.2px;top:531.4px;width:1px;height:13.100000000000023px;background:#d0d0d0"></div>
<div class="a" style="left:648.1px;top:531.4px;width:1px;height:13.100000000000023px;background:#d0d0d0"></div>
<div class="a" style="left:441.2px;top:531.4px;width:219.7px;height:13.100000000000023px;border:1px solid #c6c6c6;border-radius:2px"></div>
<div class="t s" style="left:444.5px;top:532.95px;color:#404040;font-size:7.78px;">assistant</div>
<svg class="a" style="left:641.20px;top:535.35px" width="4" height="4" viewBox="0 0 4 4"><path d="M0.6 1.2H3.4L2 2.9Z" fill="#606060"/></svg>
<svg class="a" style="left:652.20px;top:534.25px" width="6" height="6" viewBox="0 0 6 6"><path d="M2.1 2.1H0.6V5.4H3.9V3.9" stroke="#6a6a6a" stroke-width="0.8" fill="none"/><rect x="2.1" y="0.6" width="3.3" height="3.3" stroke="#6a6a6a" stroke-width="0.8" fill="none"/></svg>
</body></html>
